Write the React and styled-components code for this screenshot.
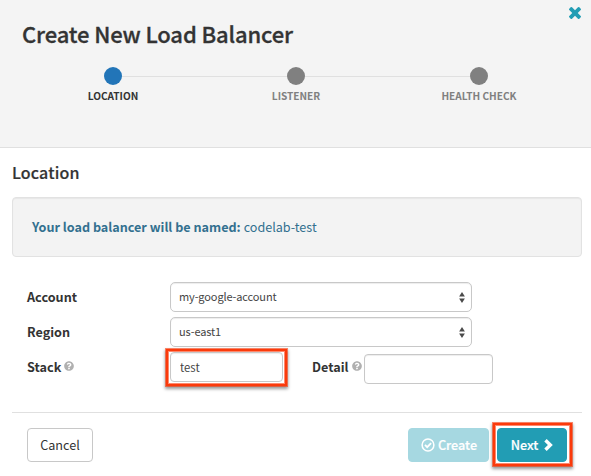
import React from 'react';
import styled, { createGlobalStyle } from 'styled-components';
import { FaQuestionCircle } from 'react-icons/fa';

const GlobalStyle = createGlobalStyle`
  *, *::before, *::after { box-sizing: border-box; }
  body { margin: 0; background: #fff; color: #333; overflow: hidden; }
  body, button, input, select { font-family: "Noto Sans CJK SC", "Open Sans", sans-serif; }
`;

const Modal = styled.div`
  width: 591px;
  height: 476px;
  background: #fff;
  display: flex;
  flex-direction: column;
`;

const Header = styled.header`
  position: relative;
  height: 148px;
  background: #f4f4f4;
  border-bottom: 1px solid #e0e0e0;
  padding-top: 18px;
`;

const Close = styled.button`
  position: absolute;
  top: 7px;
  right: 10px;
  width: 12px;
  height: 12px;
  padding: 0;
  border: 0;
  background: none;
  color: #229db4;
  svg { display: block; }
`;

const Title = styled.h3`
  margin: 0 0 0 22px;
  font-size: 22px;
  line-height: 30px;
  font-weight: 500;
  letter-spacing: -0.13px;
  -webkit-text-stroke: 0.3px currentColor;
  white-space: nowrap;
`;

const Steps = styled.ol`
  display: grid;
  grid-template-columns: repeat(3, 183px);
  list-style: none;
  margin: 19px 0 0 21px;
  padding: 0;
`;

const Step = styled.li`
  position: relative;
  display: flex;
  flex-direction: column;
  align-items: center;
  font-size: 10.1px;
  line-height: 14px;
  font-weight: 700;
  color: ${(p) => (p.$active ? '#333' : '#808080')};
  &:not(:last-child)::after {
    content: '';
    position: absolute;
    top: 9px;
    left: calc(50% + 9px);
    width: 165px;
    height: 1px;
    background: #e0e0e0;
  }
`;

const Dot = styled.span`
  width: 18px;
  height: 18px;
  border-radius: 50%;
  margin-bottom: 4px;
  background: ${(p) => (p.$active ? '#2275b8' : '#808080')};
`;

const StepName = styled.span`
  padding-left: 1px;
`;

const Body = styled.main`
  padding: 12px 9px 0 12px;
  height: 264px;
`;

const SectionTitle = styled.h4`
  margin: 0;
  font-size: 16px;
  line-height: 24px;
  font-weight: 500;
  letter-spacing: 0.15px;
  -webkit-text-stroke: 0.2px currentColor;
`;

const Well = styled.div`
  margin-top: 13px;
  height: 60px;
  padding-left: 19px;
  display: flex;
  align-items: center;
  gap: 3px;
  background: #f3f3f3;
  border: 1px solid #e2e2e2;
  border-radius: 4px;
  box-shadow: inset 0 1px 1px rgba(0, 0, 0, 0.05);
  color: #32708f;
  font-size: 12.6px;
  line-height: 18px;
  white-space: nowrap;
`;

const Form = styled.form`
  margin: 25px 0 0 15px;
  display: grid;
  grid-template-rows: 30px 30px 38px;
  row-gap: 5px;
`;

const Row = styled.div`
  display: grid;
  grid-template-columns: 143px 1fr;
  align-items: start;
`;

const PairRow = styled(Row)`
  grid-template-columns: 138px 123px 76px 130px;
`;

const Label = styled.label`
  display: flex;
  align-items: center;
  gap: 3px;
  height: 28px;
  margin-left: ${(p) => p.$indent || 0}px;
  font-size: 12.65px;
  font-weight: 700;
  svg { color: #b0b0b0; }
`;

const Select = styled.div`
  display: flex;
  align-items: center;
  justify-content: space-between;
  width: 302px;
  height: 30px;
  padding: 0 6px 0 8px;
  border: 1px solid #c8c8c8;
  border-radius: 5px;
  box-shadow: inset 0 1px 1px rgba(0, 0, 0, 0.075);
  font-size: 11px;
  letter-spacing: -0.12px;
  color: #444;
`;

const SelectValue = styled.span`
  padding-bottom: 2px;
`;

const Input = styled.input`
  width: ${(p) => p.$width}px;
  height: 30px;
  padding: 0 0 1px 9px;
  border: 1px solid #c8c8c8;
  border-radius: 4px;
  box-shadow: inset 0 1px 1px rgba(0, 0, 0, 0.075);
  font-size: 11.3px;
  color: #444;
  outline: 0;
  background: #fff;
  margin-top: ${(p) => p.$drop || 0}px;
`;

const Callout = styled.div`
  width: ${(p) => p.$width}px;
  height: ${(p) => p.$height}px;
  margin: ${(p) => p.$shift || 0}px 1px 0;
  padding: ${(p) => p.$inset}px 0 0 2px;
  display: flex;
  align-items: flex-start;
  border: 2px solid #fb3a0b;
  box-shadow:
    0 0 0 1px rgba(251, 58, 11, 0.6),
    inset 0 0 0 1px rgba(251, 58, 11, 0.6),
    0 2px 3px 1px rgba(0, 0, 0, 0.4);
`;

const Footer = styled.footer`
  margin: 0 9px 0 12px;
  border-top: 1px solid #e0e0e0;
  height: 64px;
  padding: 10px 9px 0 15px;
  display: flex;
  align-items: flex-start;
`;

const Button = styled.button`
  display: flex;
  flex-shrink: 0;
  align-items: center;
  justify-content: center;
  gap: ${(p) => p.$gap || 0}px;
  width: ${(p) => p.$width}px;
  height: 34px;
  padding: 0 0 1px;
  border: 1px solid ${(p) => (p.$primary ? '#229db4' : '#c8c8c8')};
  border-radius: 4px;
  background: ${(p) => (p.$primary ? '#229db4' : '#fff')};
  color: ${(p) => (p.$primary ? '#fff' : '#333')};
  font-size: 12.65px;
  font-weight: ${(p) => (p.$primary ? 500 : 400)};
  -webkit-text-stroke: ${(p) => (p.$primary ? '0.2px' : '0')} currentColor;
  white-space: nowrap;
  &:disabled { background: #a6d8e1; border-color: #a6d8e1; }
`;

const CancelButton = styled(Button)`
  margin-top: 5px;
  margin-right: auto;
`;

const CreateButton = styled(Button)`
  margin: 5px 3px 0 0;
  padding-left: 1px;
`;

const CloseIcon = () => (
  <svg width="12" height="12" viewBox="302 302 1188 1188" fill="currentColor">
    <path d="M1490 1322q0 40-28 68l-136 136q-28 28-68 28t-68-28l-294-294-294 294q-28 28-68 28t-68-28l-136-136q-28-28-28-68t28-68l294-294-294-294q-28-28-28-68t28-68l136-136q28-28 68-28t68 28l294 294 294-294q28-28 68-28t68 28l136 136q28 28 28 68t-28 68l-294 294 294 294q28 28 28 68z" transform="translate(0 -64)" />
  </svg>
);

const Arrows = () => (
  <svg width="6" height="11" viewBox="0 0 6 11" fill="#4a4a4a">
    <path d="M3 0 5.9 4.5H.1zM3 11 .1 6.5h5.8z" />
  </svg>
);

const CheckCircle = () => (
  <svg width="14" height="14" viewBox="0 0 14 14" fill="none" stroke="#fff">
    <circle cx="7" cy="7" r="5.9" strokeWidth="1.5" />
    <path d="m4 6.9 2.2 2.2 3.9-3.9" strokeWidth="1.9" />
  </svg>
);

const Chevron = () => (
  <svg width="9" height="12" viewBox="0 0 9 12" fill="#fff">
    <path d="M.3 2.4 2.7 0l6.1 6-6.1 6L.3 9.6 3.9 6z" />
  </svg>
);

const STEPS = ['LOCATION', 'LISTENER', 'HEALTH CHECK'];

export default function App() {
  return (
    <>
      <GlobalStyle />
      <Modal>
        <Header>
          <Close aria-label="Close"><CloseIcon /></Close>
          <Title>Create New Load Balancer</Title>
          <Steps>
            {STEPS.map((name, i) => (
              <Step key={name} $active={i === 0}>
                <Dot $active={i === 0} />
                <StepName>{name}</StepName>
              </Step>
            ))}
          </Steps>
        </Header>
        <Body>
          <SectionTitle>Location</SectionTitle>
          <Well>
            <strong>Your load balancer will be named:</strong>
            <span>codelab-test</span>
          </Well>
          <Form>
            <Row>
              <Label>Account</Label>
              <Select><SelectValue>my-google-account</SelectValue><Arrows /></Select>
            </Row>
            <Row>
              <Label>Region</Label>
              <Select><SelectValue>us-east1</SelectValue><Arrows /></Select>
            </Row>
            <PairRow>
              <Label>Stack<FaQuestionCircle size={10} /></Label>
              <Callout $width={121} $height={37} $shift={-3} $inset={1}>
                <Input $width={113} defaultValue="test" />
              </Callout>
              <Label $indent={24}>Detail<FaQuestionCircle size={10} /></Label>
              <Input $width={129} $drop={2} />
            </PairRow>
          </Form>
        </Body>
        <Footer>
          <CancelButton $width={66}>Cancel</CancelButton>
          <CreateButton $width={81} $gap={3} $primary disabled><CheckCircle />Create</CreateButton>
          <Callout $width={79} $height={43} $inset={3}>
            <Button $width={70} $gap={6} $primary>Next<Chevron /></Button>
          </Callout>
        </Footer>
      </Modal>
    </>
  );
}
